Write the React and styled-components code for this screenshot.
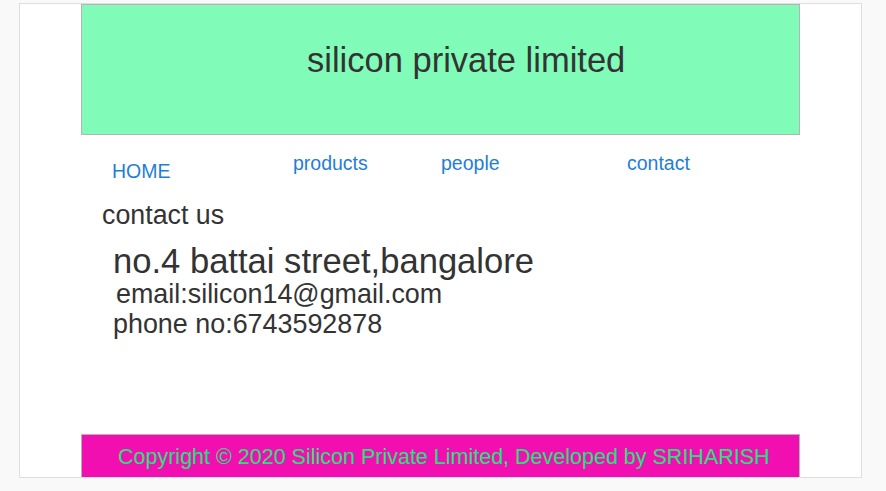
import React from "react";
import styled, { createGlobalStyle } from "styled-components";

const GlobalStyle = createGlobalStyle`
  html, body {
    margin: 0;
    padding: 0;
    background: #f9f9f9;
    font-family: "Liberation Sans", Arial, sans-serif;
  }
`;

const navItems = [
  { label: "HOME", width: 181, drop: 8 },
  { label: "products", width: 148, drop: 0 },
  { label: "people", width: 186, drop: 0 },
  { label: "contact", width: 100, drop: 0 },
];

const App = () => {
  return (
    <>
      <GlobalStyle />
      <Frame>
        <Page>
          <Header>
            <h1>silicon private limited</h1>
          </Header>

          <Nav>
            {navItems.map((item) => (
              <NavLink key={item.label} href="#" $width={item.width} $drop={item.drop}>
                {item.label}
              </NavLink>
            ))}
          </Nav>

          <Contact>
            <h2>contact us</h2>
            <Address>no.4 battai street,bangalore</Address>
            <Line $indent={14} $gap={3}>email:silicon14@gmail.com</Line>
            <Line $indent={11} $gap={3}>phone no:6743592878</Line>
          </Contact>

          <Footer>
            Copyright © 2020 Silicon Private Limited, Developed by SRIHARISH
          </Footer>
        </Page>
      </Frame>
    </>
  );
};

const Frame = styled.div`
  box-sizing: border-box;
  width: 843px;
  height: 475px;
  margin: 3px 0 0 19px;
  background: #fff;
  border: 1px solid #dedede;
  overflow: hidden;
`;

const Page = styled.div`
  width: 719px;
  margin-left: 61px;
`;

const Header = styled.header`
  box-sizing: border-box;
  height: 131px;
  background: #80fbb8;
  border: 1px solid #b4b4b4;
  padding: 38px 0 0 225px;

  h1 {
    margin: 0;
    font-size: 34.5px;
    font-weight: normal;
    line-height: 1;
    color: #333;
  }
`;

const Nav = styled.nav`
  display: flex;
  align-items: flex-start;
  margin-top: 19px;
  padding-left: 31px;
  height: 28px;
`;

const NavLink = styled.a`
  flex: 0 0 ${({ $width }) => $width}px;
  margin-top: ${({ $drop }) => $drop}px;
  font-size: 19.5px;
  line-height: 1;
  color: #1f7ed8;
  text-decoration: none;
`;

const Contact = styled.section`
  margin-top: 20px;
  color: #333;

  h2 {
    margin: 0 0 0 21px;
    font-size: 26.8px;
    font-weight: normal;
    line-height: 1;
  }
`;

const Address = styled.p`
  margin: 15px 0 0 32px;
  font-size: 34.6px;
  line-height: 1;
`;

const Line = styled.p`
  margin: ${({ $gap }) => $gap}px 0 0 ${({ $indent }) => 21 + $indent}px;
  font-size: 26.9px;
  line-height: 1;
`;

const Footer = styled.footer`
  box-sizing: border-box;
  height: 50px;
  margin-top: 96px;
  padding: 12px 0 0 36px;
  background: #f10fb1;
  border: 1px solid #b4b4b4;
  color: #22e57a;
  font-size: 21.5px;
  line-height: 1;
  white-space: nowrap;
`;

export default App;
